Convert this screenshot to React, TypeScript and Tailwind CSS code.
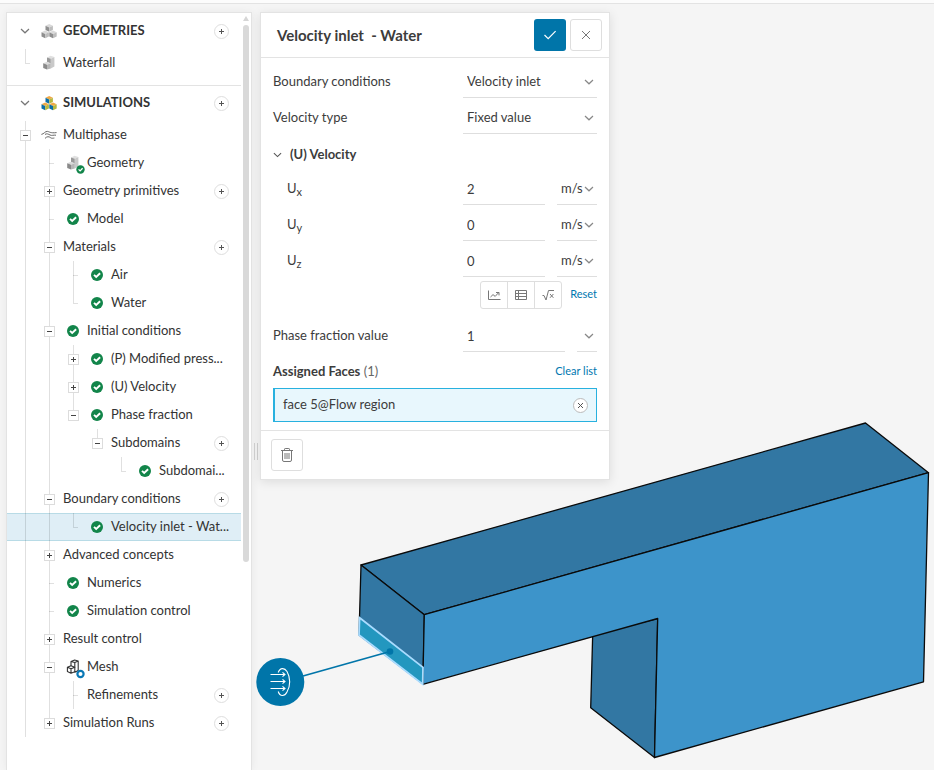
import { useState } from 'react';
import type { ReactNode } from 'react';
import clsx from 'clsx';

type Guide = 'none' | 'line' | 'tee' | 'corner' | 'half';

interface TreeNode {
  label: string;
  guides: Guide[];
  toggle?: 'open' | 'closed';
  icon?: ReactNode;
  add?: boolean;
  selected?: boolean;
}

/* Icons */

function Cube({ x, y, top, left, right }: { x: number; y: number; top: string; left: string; right: string }) {
  return (
    <g transform={`translate(${x} ${y})`}>
      <path d="M0 -3.9 L3.7 -2.2 L0 -0.5 L-3.7 -2.2 Z" fill={top} />
      <path d="M-3.7 -2.2 L0 -0.5 V3.8 L-3.7 2.1 Z" fill={left} />
      <path d="M3.7 -2.2 L0 -0.5 V3.8 L3.7 2.1 Z" fill={right} />
    </g>
  );
}

function CubesIcon({ color }: { color?: boolean }) {
  const c = color
    ? { top: '#efa845', left: '#0a6ea8', right: '#b5b842' }
    : { top: '#d9d9d9', left: '#8f8f8f', right: '#bdbdbd' };
  return (
    <svg width="16" height="16" viewBox="0 0 16 16" aria-hidden="true">
      <Cube x={8.2} y={5} {...c} />
      <Cube x={4.2} y={11.4} {...c} />
      <Cube x={12} y={11.4} {...c} />
    </svg>
  );
}

function PartIcon({ badge }: { badge?: boolean }) {
  return (
    <svg width="18" height="18" viewBox="0 0 18 18" aria-hidden="true" className="overflow-visible">
      <path d="M7 3.4 L10.6 1.8 L14.4 3 L10.8 4.8 Z" fill="#e0e0e0" />
      <path d="M7 3.4 L10.8 4.8 V9.4 L7 8 Z" fill="#999999" />
      <path d="M14.4 3 L10.8 4.8 V14.6 L14.4 12.6 Z" fill="#c9c9c9" />
      <path d="M3.2 9.2 L7 7.8 L10.8 9.2 L7 10.8 Z" fill="#dadada" />
      <path d="M3.2 9.2 L7 10.8 V15.6 L3.2 14 Z" fill="#8a8a8a" />
      <path d="M10.8 9.2 L7 10.8 V15.6 L10.8 14.4 Z" fill="#b6b6b6" />
      {badge && (
        <>
          <circle cx="16.5" cy="15.5" r="4.2" fill="#12854a" />
          <path d="M14.6 15.4 L16.1 16.9 L18.6 14.2" fill="none" stroke="#fff" strokeWidth="1.3" />
        </>
      )}
    </svg>
  );
}

function MeshIcon() {
  return (
    <svg width="18" height="18" viewBox="0 0 18 18" aria-hidden="true" className="overflow-visible">
      <g fill="none" stroke="#333" strokeWidth="1.1" strokeLinejoin="round">
        <path d="M7 3.4 L10.6 2 L14.2 3 L10.8 4.6 Z M7 3.4 V8 M10.8 4.6 V14.2 L14.2 12.4 V3" />
        <path d="M3.4 9.2 L7 7.8 L10.8 9.2 L7 10.8 Z M3.4 9.2 V13.6 L7 15.2 V10.8 M7 15.2 L10.8 13.8" />
      </g>
      <circle cx="16.5" cy="16" r="3.1" fill="#fff" stroke="#0a78b5" strokeWidth="2.2" />
    </svg>
  );
}

function FlowIcon() {
  return (
    <svg width="16" height="10" viewBox="0 0 16 10" aria-hidden="true" fill="none" stroke="#666" strokeWidth="1">
      <path d="M0.4 4.4 C3 4 4 1.2 6.4 1.4 C8.4 1.6 9 3.4 15.6 2.6" />
      <path d="M4 4.4 C6 3.2 7.4 4.2 9 5 C11 6 12.4 4.8 15 5.2" />
      <path d="M4 8.4 C6 6.2 8 6.4 9.4 7.6 C10.6 8.6 12 8.2 13.4 8" />
    </svg>
  );
}

function OkIcon() {
  return (
    <svg width="12" height="12" viewBox="0 0 12 12" aria-hidden="true">
      <circle cx="6" cy="6" r="6" fill="#12854a" />
      <path d="M3 5.8 L5.2 8 L9.1 4.2" fill="none" stroke="#fff" strokeWidth="1.9" />
    </svg>
  );
}

function Chevron({ className }: { className?: string }) {
  return (
    <svg width="10" height="6" viewBox="0 0 10 6" aria-hidden="true" className={className}>
      <path d="M1 1 L5 4.8 L9 1" fill="none" stroke="currentColor" strokeWidth="1.2" />
    </svg>
  );
}

/* Model tree */

const ok = <OkIcon />;

const simulationTree: TreeNode[] = [
  { label: 'Multiphase', guides: ['line'], toggle: 'open', icon: <FlowIcon /> },
  { label: 'Geometry', guides: ['line', 'tee'], icon: <PartIcon badge /> },
  { label: 'Geometry primitives', guides: ['line', 'line'], toggle: 'closed', add: true },
  { label: 'Model', guides: ['line', 'tee'], icon: ok },
  { label: 'Materials', guides: ['line', 'line'], toggle: 'open', add: true },
  { label: 'Air', guides: ['line', 'line', 'tee'], icon: ok },
  { label: 'Water', guides: ['line', 'line', 'corner'], icon: ok },
  { label: 'Initial conditions', guides: ['line', 'line'], toggle: 'open', icon: ok },
  { label: '(P) Modified press...', guides: ['line', 'line', 'line'], toggle: 'closed', icon: ok },
  { label: '(U) Velocity', guides: ['line', 'line', 'line'], toggle: 'closed', icon: ok },
  { label: 'Phase fraction', guides: ['line', 'line', 'half'], toggle: 'open', icon: ok },
  { label: 'Subdomains', guides: ['line', 'line', 'none', 'half'], toggle: 'open', add: true },
  { label: 'Subdomai...', guides: ['line', 'line', 'none', 'none', 'corner'], icon: ok },
  { label: 'Boundary conditions', guides: ['line', 'line'], toggle: 'open', add: true },
  { label: 'Velocity inlet - Wat...', guides: ['line', 'line', 'corner'], icon: ok, selected: true },
  { label: 'Advanced concepts', guides: ['line', 'line'], toggle: 'closed' },
  { label: 'Numerics', guides: ['line', 'tee'], icon: ok },
  { label: 'Simulation control', guides: ['line', 'tee'], icon: ok },
  { label: 'Result control', guides: ['line', 'line'], toggle: 'closed' },
  { label: 'Mesh', guides: ['line', 'line'], toggle: 'open', icon: <MeshIcon /> },
  { label: 'Refinements', guides: ['line', 'line', 'tee'], add: true },
  { label: 'Simulation Runs', guides: ['line', 'half'], toggle: 'closed', add: true },
];

function AddButton({ label }: { label: string }) {
  return (
    <button
      aria-label={`Add to ${label}`}
      className="mt-px ml-auto grid size-[15px] shrink-0 place-items-center rounded-full border border-[#dedede] bg-white text-[#555]"
    >
      <svg width="5" height="5" viewBox="0 0 5 5" aria-hidden="true">
        <path d="M2.5 0 V5 M0 2.5 H5" stroke="currentColor" strokeWidth="1" />
      </svg>
    </button>
  );
}

function GuideCell({ type, toggle, label }: { type: Guide; toggle?: 'open' | 'closed'; label: string }) {
  const short = type === 'corner' || type === 'half';
  return (
    <span className="relative flex h-7 w-6 shrink-0 items-start pt-[9px] pl-[7px]">
      {type !== 'none' && (
        <span className={clsx('absolute top-0 left-3 w-px bg-black/12', short ? 'h-[14px]' : 'h-7')} />
      )}
      {(type === 'tee' || type === 'corner') && (
        <span className="absolute top-[14px] left-3 h-px w-[5px] bg-black/12" />
      )}
      {toggle && (
        <button
          aria-label={`Toggle ${label}`}
          className="relative grid size-[11px] place-items-center border border-[#dcdcdc] bg-white text-[#444]"
        >
          <svg width="5" height="5" viewBox="0 0 5 5" aria-hidden="true">
            <path d={toggle === 'open' ? 'M0 2.5 H5' : 'M2.5 0 V5 M0 2.5 H5'} stroke="currentColor" />
          </svg>
        </button>
      )}
    </span>
  );
}

function TreeRow({ node }: { node: TreeNode }) {
  const last = node.guides.length - 1;
  return (
    <li
      className={clsx(
        'relative flex h-7 items-center pr-3 pl-1.5',
        node.selected && 'bg-[#dfeef6] shadow-[inset_0_1px_#b8dbe6,inset_0_-1px_#b8dbe6]',
      )}
    >
      {node.guides.map((g, i) => (
        <GuideCell key={i} type={g} toggle={i === last ? node.toggle : undefined} label={node.label} />
      ))}
      {node.icon && <span className="grid h-7 w-6 shrink-0 place-items-center">{node.icon}</span>}
      <span className="pb-0.5 pl-0.5 leading-5 whitespace-nowrap">{node.label}</span>
      {node.add && <AddButton label={node.label} />}
    </li>
  );
}

function SectionHeader({ title, color }: { title: string; color?: boolean }) {
  return (
    <div className="flex h-[34px] items-center pr-3 pl-1.5">
      <button aria-label={`Collapse ${title}`} className="grid h-7 w-6 place-items-center text-[#777]">
        <Chevron />
      </button>
      <span className="grid w-6 place-items-center">
        <CubesIcon color={color} />
      </span>
      <h2 className="pb-0.5 pl-0.5 leading-5 font-bold">{title}</h2>
      <AddButton label={title} />
    </div>
  );
}

function Sidebar() {
  return (
    <aside className="flex w-[246px] shrink-0 border border-b-0 border-[#e3e3e3] bg-white text-[13px] text-[#333] shadow-[0_0_8px_rgba(0,0,0,0.06)]">
      <nav aria-label="Project tree" className="min-w-0 flex-1">
        <section className="border-b border-[#e3e3e3] pt-px pb-2">
          <SectionHeader title="GEOMETRIES" />
          <ul className="pt-px">
            <TreeRow node={{ label: 'Waterfall', guides: ['corner'], icon: <PartIcon /> }} />
          </ul>
        </section>
        <section>
          <SectionHeader title="SIMULATIONS" color />
          <ul className="pt-px">
            {simulationTree.map((node) => (
              <TreeRow key={node.label} node={node} />
            ))}
          </ul>
        </section>
      </nav>
      {/* Scroll bar */}
      <div className="flex w-[10px] shrink-0 flex-col items-center pt-[3px]">
        <svg width="6" height="5" viewBox="0 0 6 5" aria-hidden="true">
          <path d="M3 0 L6 5 H0 Z" fill="#d6d6d6" />
        </svg>
        <div className="mt-1 h-[537px] w-1.5 rounded-full bg-[#d9d9d9]" />
      </div>
    </aside>
  );
}

/* Settings panel */

function SelectField({ id, label, options, className }: { id: string; label?: string; options: string[]; className: string }) {
  return (
    <div className={clsx('relative h-9 border-b border-[#dedede]', className)}>
      <select id={id} aria-label={label} className="h-full w-full appearance-none bg-transparent pt-1 pl-1 outline-none">
        {options.map((o) => (
          <option key={o}>{o}</option>
        ))}
      </select>
      <Chevron className="pointer-events-none absolute top-[17px] right-[3px] text-[#888]" />
    </div>
  );
}

function VelocityRow({ axis, value }: { axis: string; value: string }) {
  const [v, setV] = useState(value);
  return (
    <div className="flex h-9 items-center gap-3">
      <label htmlFor={`u${axis}`} className="flex-1 pt-[3px] pl-[14px]">
        U<sub className="text-[11px]">{axis}</sub>
      </label>
      <input
        id={`u${axis}`}
        value={v}
        onChange={(e) => setV(e.target.value)}
        className="h-9 w-[82px] border-b border-[#dedede] pt-1 pl-1 outline-none"
      />
      <SelectField id={`unit-${axis}`} label={`Unit of U${axis}`} options={['m/s']} className="w-10" />
    </div>
  );
}

function SettingsPanel() {
  const [fraction, setFraction] = useState('1');

  return (
    <section className="relative w-[350px] border border-[#e3e3e3] bg-white text-[13px] text-[#3c3c3c] shadow-[0_2px_10px_rgba(0,0,0,0.1)]">
      <header className="flex h-[45px] items-center gap-1 border-b border-[#e3e3e3] pr-[7px] pl-4">
        <h1 className="flex-1 text-[15px] font-bold whitespace-pre">Velocity inlet  - Water</h1>
        <button aria-label="Apply" className="grid size-8 place-items-center rounded-[3px] bg-[#0075a9] text-white">
          <svg width="14" height="10" viewBox="0 0 14 10" aria-hidden="true">
            <path d="M1.5 5 L5.2 8.6 L12.6 1.2" fill="none" stroke="currentColor" strokeWidth="1.2" />
          </svg>
        </button>
        <button aria-label="Close" className="grid size-8 place-items-center rounded-[3px] border border-[#dedede] text-[#777]">
          <svg width="10" height="10" viewBox="0 0 10 10" aria-hidden="true">
            <path d="M1 1 L9 9 M9 1 L1 9" stroke="currentColor" strokeWidth="1" />
          </svg>
        </button>
      </header>

      <div className="px-3 pt-1 pb-2">
        <div className="flex h-9 items-center">
          <label htmlFor="bc" className="flex-1 pt-[3px]">Boundary conditions</label>
          <SelectField id="bc" options={['Velocity inlet']} className="w-[134px]" />
        </div>
        <div className="flex h-9 items-center">
          <label htmlFor="vtype" className="flex-1 pt-[3px]">Velocity type</label>
          <SelectField id="vtype" options={['Fixed value']} className="w-[134px]" />
        </div>

        <button className="flex h-[35px] items-center gap-2 pt-1.5 font-bold">
          <Chevron className="w-[9px] text-[#555]" />
          (U) Velocity
        </button>
        <VelocityRow axis="x" value="2" />
        <VelocityRow axis="y" value="0" />
        <VelocityRow axis="z" value="0" />

        <div className="mt-1 flex items-center justify-end gap-2">
          <div className="flex h-7 w-[82px] divide-x divide-[#dedede] rounded-[3px] border border-[#dedede] text-[#777]">
            <button aria-label="Function plot" className="grid flex-1 place-items-center">
              <svg width="13" height="11" viewBox="0 0 13 11" fill="none" stroke="currentColor" aria-hidden="true">
                <path d="M0.5 0.5 V9.5 H12.5" />
                <path d="M2.5 7 L5 4.6 L7.2 6.4 L10.8 2.4 M8 2.5 H11 V5.4" />
              </svg>
            </button>
            <button aria-label="Table" className="grid flex-1 place-items-center">
              <svg width="12" height="11" viewBox="0 0 12 11" fill="none" stroke="currentColor" aria-hidden="true">
                <path d="M0.5 0.5 H11.5 V9.5 H0.5 Z M0.5 3.5 H11.5 M0.5 6.5 H11.5 M3.5 0.5 V9.5" />
              </svg>
            </button>
            <button aria-label="Formula" className="grid flex-1 place-items-center">
              <svg width="13" height="12" viewBox="0 0 13 12" fill="none" stroke="currentColor" aria-hidden="true">
                <path d="M0.5 6.5 H2 L4 11 L6.5 1.5 H12" />
                <path d="M8 5 L11.4 8.8 M11.4 5 L8 8.8" />
              </svg>
            </button>
          </div>
          <button className="pb-0.5 text-[11px] text-[#0077b0]">Reset</button>
        </div>

        <div className="mt-[7px] flex h-9 items-center gap-3">
          <label htmlFor="fraction" className="flex-1 pt-[3px]">Phase fraction value</label>
          <input
            id="fraction"
            value={fraction}
            onChange={(e) => setFraction(e.target.value)}
            className="h-9 w-[102px] border-b border-[#dedede] pt-1 pl-1 outline-none"
          />
          <SelectField id="fraction-unit" label="Phase fraction unit" options={['']} className="w-5" />
        </div>

        <div className="flex h-9 items-center justify-between pt-[3px]">
          <h2>
            <span className="font-bold">Assigned Faces</span> <span className="text-[#666]">(1)</span>
          </h2>
          <button className="text-[11px] text-[#0077b0]">Clear list</button>
        </div>
        <div className="flex h-[34px] items-center justify-between border border-l-2 border-[#28b1df] bg-[#e8f7fd] px-2">
          <span>face 5@Flow region</span>
          <button
            aria-label="Remove face"
            className="grid size-[15px] place-items-center rounded-full border border-[#bbb] bg-white text-[#555]"
          >
            <svg width="7" height="7" viewBox="0 0 7 7" aria-hidden="true">
              <path d="M1 1 L6 6 M6 1 L1 6" stroke="currentColor" strokeWidth="1" />
            </svg>
          </button>
        </div>
      </div>

      <footer className="border-t border-[#e3e3e3] py-2 pl-[10px]">
        <button aria-label="Delete" className="grid size-8 place-items-center rounded-[3px] border border-[#dedede] text-[#777]">
          <svg width="12" height="14" viewBox="0 0 12 14" fill="none" stroke="currentColor" aria-hidden="true">
            <path d="M0 2.5 H12 M3.5 2.5 V1.2 Q3.5 0.5 4.2 0.5 H7.8 Q8.5 0.5 8.5 1.2 V2.5" />
            <path d="M1.5 2.5 V12 Q1.5 13.5 3 13.5 H9 Q10.5 13.5 10.5 12 V2.5" />
            <path d="M4 5 V11 M6 5 V11 M8 5 V11" />
          </svg>
        </button>
      </footer>
    </section>
  );
}

/* 3D view of the flow region */

function Viewport() {
  return (
    <svg
      viewBox="0 4 934 766"
      preserveAspectRatio="xMinYMin meet"
      role="img"
      aria-label="Flow region"
      className="absolute inset-0 h-full w-full"
    >
      <g stroke="#0a0a0a" strokeWidth="1.3" strokeLinejoin="round">
        <path d="M592.7 634 L590.7 707.7 L654.5 757.5 L657.7 618.5 Z" fill="#3277a3" />
        <path d="M361 565 L865.5 423 L928.5 472.7 L424.3 614.7 Z" fill="#3277a3" />
        <path d="M361 565 L424.3 614.7 L423 684 L359 635 Z" fill="#3277a3" />
        <path d="M424.3 614.7 L928.5 472.7 L923.5 681.8 L654.5 757.5 L657.7 618.5 L422.8 684.3 Z" fill="#3d94ca" />
      </g>
      <path d="M359.6 617.8 L423 667.4 L422.7 684.2 L359 635 Z" fill="#2397bf" stroke="#a9dcff" strokeWidth="1.8" />
      <path d="M303 676 L390 651.5" stroke="#0075a9" strokeWidth="1.8" />
      <circle cx="390" cy="651.5" r="3.3" fill="#0075a9" />
      <circle cx="280.3" cy="682" r="24" fill="#0075a9" />
      <g fill="none" stroke="#fff" strokeWidth="1.1">
        <path d="M270.5 674.5 H285 M270.5 681.5 H285 M270.5 688.5 H285" />
        <path d="M282.5 672.3 L285 674.5 L282.5 676.7 M282.5 679.3 L285 681.5 L282.5 683.7 M282.5 686.3 L285 688.5 L282.5 690.7" />
        <path d="M278.2 672.5 C280 667.5 284.5 667.5 287 671.5 C290.6 677.5 290.6 686 287 692 C284.5 696.8 280 696.8 278.2 691.5" />
      </g>
    </svg>
  );
}

export default function App() {
  return (
    <div className="flex min-h-screen flex-col bg-[#f5f5f5] font-['Lato',sans-serif]">
      <div className="h-1 border-b border-[#e3e3e3] bg-[#fcfcfc]" />
      <main className="relative flex flex-1 items-stretch pt-2 pl-1.5">
        <Viewport />
        <div className="relative flex">
          <Sidebar />
        </div>
        {/* Resize handle */}
        <div className="relative mt-[431px] ml-0.5 flex h-[17px] w-1 justify-between">
          <span className="w-px bg-[#cfcfcf]" />
          <span className="w-px bg-[#cfcfcf]" />
        </div>
        <div className="ml-0.5">
          <SettingsPanel />
        </div>
      </main>
    </div>
  );
}
